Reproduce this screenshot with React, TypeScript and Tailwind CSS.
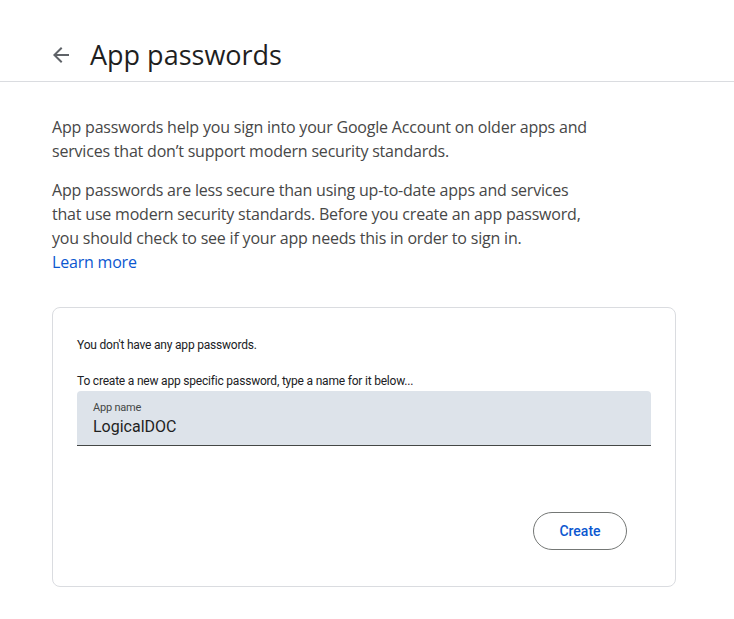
import React from 'react';

export default function App() {
    return (
        <div className="min-h-[619px] w-full bg-white" style={{ fontFamily: 'Roboto, "Open Sans", sans-serif' }}>
            {/* Header */}
            <div className="flex h-[82px] items-center gap-[17px] border-b border-[#dadce0] pl-[49px] pt-[28px]">
                <svg viewBox="0 0 24 24" className="h-[24px] w-[24px] fill-[#5f6368]">
                    <path d="M20 11H7.83l5.59-5.59L12 4l-8 8 8 8 1.41-1.41L7.83 13H20v-2z" />
                </svg>
                <h1 className="text-[27px] leading-[36px] text-[#1f1f1f]" style={{ fontFamily: '"Open Sans", Roboto, sans-serif' }}>
                    App passwords
                </h1>
            </div>

            <div className="px-[52px] pt-[33px]">
                <div className="text-[16px] leading-[24px] tracking-[-0.2px] text-[#474747]" style={{ fontFamily: '"Open Sans", Roboto, sans-serif' }}>
                    <p>
                        App passwords help you sign into your Google Account on older apps and
                        <br />
                        services that don’t support modern security standards.
                    </p>
                    <p className="mt-[15px]">
                        App passwords are less secure than using up-to-date apps and services
                        <br />
                        that use modern security standards. Before you create an app password,
                        <br />
                        you should check to see if your app needs this in order to sign in.
                    </p>
                    <a href="#" className="block w-fit text-[#0b57d0]">Learn more</a>
                </div>

                {/* Card */}
                <div className="mt-[33px] h-[280px] w-[624px] rounded-[8px] border border-[#dadce0] px-[24px] pt-[27px]">
                    <p className="text-[12px] leading-[20px] tracking-[-0.2px] text-[#202124]">You don't have any app passwords.</p>
                    <p className="mt-[16px] text-[12px] leading-[20px] tracking-[-0.2px] text-[#202124]">
                        To create a new app specific password, type a name for it below...
                    </p>
                    <div className="h-[55px] w-[574px] rounded-t-[4px] border-b border-[#444746] bg-[#dde3ea] px-[16px] pt-[9px]">
                        <div className="text-[11px] leading-[16px] tracking-[-0.2px] text-[#444746]">App name</div>
                        <div className="text-[16px] leading-[22px] text-[#1f1f1f]">LogicalDOC</div>
                    </div>
                    <div className="mt-[66px] flex justify-end pr-[24px]">
                        <button className="h-[38px] w-[94px] rounded-full border border-[#747775] text-[14px] font-medium text-[#0b57d0]">
                            Create
                        </button>
                    </div>
                </div>
            </div>
        </div>
    );
}
